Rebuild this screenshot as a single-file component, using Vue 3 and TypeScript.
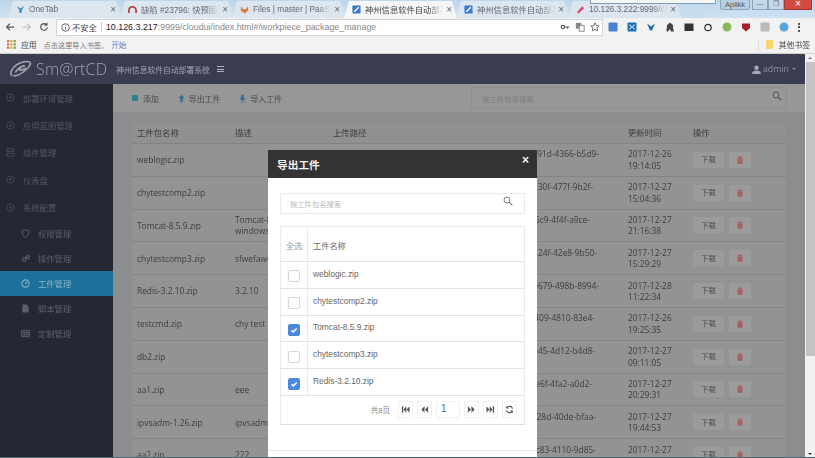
<script setup lang="ts">
interface Row {
  name: string
  desc: string
  path: string
  end: number
  date: string
  time: string
}

const tabs = [
  { title: 'OneTab', color: '#3d8fd1', mark: 'v', active: false },
  { title: '缺陷 #23796: 快预固', color: '#b5473f', mark: 'arc', active: false },
  { title: 'Files | master | PaaS /', color: '#e2763a', mark: 'fox', active: false },
  { title: '神州信息软件自动部署', color: '#3a78d8', mark: 'box', active: true },
  { title: '神州信息软件自动部署', color: '#3a78d8', mark: 'box', active: false },
  { title: '10.126.3.222:9999/clc', color: '#d9476a', mark: 'pen', active: false },
]

const extensions = ['#4a7fd6', '#1c6fb5', '#1d6fb0', '#444', '#333', '#333', '#8cb85c', '#a81e2a', '#b9b9b9', '#58a6dd']

const topMenu = [
  { label: '部署环境管理', icon: 'ring' },
  { label: '应用蓝图管理', icon: 'ring' },
  { label: '组件管理', icon: 'stack' },
  { label: '仪表盘', icon: 'ring' },
  { label: '系统配置', icon: 'ring' },
]
const subMenu = [
  { label: '权限管理', icon: 'shield', active: false },
  { label: '操作管理', icon: 'gears', active: false },
  { label: '工件管理', icon: 'gauge', active: true },
  { label: '脚本管理', icon: 'file', active: false },
  { label: '定制管理', icon: 'grid', active: false },
]

const rows: Row[] = [
  { name: 'weblogic.zip', desc: '', path: '/cloudui/repo/workpiece/5e7c291d-4366-b5d9-', end: 599, date: '2017-12-26', time: '19:14:05' },
  { name: 'chytestcomp2.zip', desc: '', path: '/cloudui/repo/workpiece/7a1c230f-477f-9b2f-', end: 593, date: '2017-12-27', time: '15:04:36' },
  { name: 'Tomcat-8.5.9.zip', desc: 'Tomcat-8.5.9 windows', path: '/cloudui/repo/workpiece/3fd065c9-4f4f-a9ce-', end: 590, date: '2017-12-27', time: '21:16:38' },
  { name: 'chytestcomp3.zip', desc: 'sfwefawef', path: '/cloudui/repo/workpiece/90be424f-42e8-9b50-', end: 597, date: '2017-12-27', time: '15:29:29' },
  { name: 'Redis-3.2.10.zip', desc: '3.2.10', path: '/cloudui/repo/workpiece/c21d0679-498b-8994-', end: 599, date: '2017-12-28', time: '11:22:34' },
  { name: 'testcmd.zip', desc: 'chy  test', path: '/cloudui/repo/workpiece/68ab3409-4810-83e4-', end: 595, date: '2017-12-26', time: '19:25:35' },
  { name: 'db2.zip', desc: '', path: '/cloudui/repo/workpiece/b17f6e45-4d12-b4d8-', end: 595, date: '2017-12-27', time: '09:11:05' },
  { name: 'aa1.zip', desc: 'eee', path: '/cloudui/repo/workpiece/42c9de6f-4fa2-a0d2-', end: 592, date: '2017-12-27', time: '20:29:31' },
  { name: 'ipvsadm-1.26.zip', desc: 'ipvsadm-1.26', path: '/cloudui/repo/workpiece/d3e0128d-40de-bfaa-', end: 596, date: '2017-12-27', time: '19:44:53' },
  { name: 'aa2.zip', desc: '222', path: '/cloudui/repo/workpiece/81f5ac83-4110-9d85-', end: 596, date: '2017-12-27', time: '20:31:17' },
]

const exportRows = [
  { name: 'weblogic.zip', checked: false },
  { name: 'chytestcomp2.zip', checked: false },
  { name: 'Tomcat-8.5.9.zip', checked: true },
  { name: 'chytestcomp3.zip', checked: false },
  { name: 'Redis-3.2.10.zip', checked: true },
]

// path 单元格右边缘在 623
function pathPad(end: number) {
  return 623 - end + 'px'
}
</script>

<template>
  <div class="screen">
    <div class="tabstrip">
      <div v-for="tab in tabs" :key="tab.title + tab.active" class="tab" :class="{ on: tab.active }">
        <svg class="favicon" viewBox="0 0 10 10">
          <path v-if="tab.mark === 'v'" d="M1 1l4 3 4-3-2.6 5v3H3.6V6z" :fill="tab.color" />
          <path v-else-if="tab.mark === 'arc'" d="M1 9V6a4 4 0 0 1 8 0v3" fill="none" :stroke="tab.color" stroke-width="2" />
          <path v-else-if="tab.mark === 'fox'" d="M5 9.5L.6 5.8 1.8 1l1.4 3.6h3.6L8.2 1l1.2 4.8z" :fill="tab.color" />
          <g v-else-if="tab.mark === 'box'">
            <rect x="0.5" y="0.5" width="9" height="9" rx="1" :fill="tab.color" />
            <path d="M2.5 7.5L7.5 2.5" stroke="#fff" stroke-width="1.6" />
          </g>
          <path v-else d="M1 8L7 1.5 9 3.5 3 9.5z" :fill="tab.color" />
        </svg>
        <span class="tab-title">{{ tab.title }}</span>
        <span class="tab-close">×</span>
      </div>
      <div class="tab-spare"></div>
      <div class="win-user">Aplikk</div>
      <div class="win-btn">—</div>
      <div class="win-btn">❐</div>
      <div class="win-close">×</div>
      <div class="tooltip-edge"></div>
    </div>

    <div class="toolbar">
      <svg class="nav" viewBox="0 0 12 12"><path d="M11 6H2M6 2L2 6l4 4" fill="none" stroke="#555" stroke-width="1.5" /></svg>
      <svg class="nav" viewBox="0 0 12 12"><path d="M1 6h9M6 2l4 4-4 4" fill="none" stroke="#c4c4c4" stroke-width="1.5" /></svg>
      <svg class="nav" viewBox="0 0 12 12"><path d="M10 6.500A4 4 0 1 1 8.800 3M9.500 .8v3h-3" fill="none" stroke="#555" stroke-width="1.400" /></svg>
      <div class="omnibox">
        <svg class="info" viewBox="0 0 10 10"><circle cx="5" cy="5" r="4.200" fill="none" stroke="#555" /><path d="M5 4.400v3M5 2.500v1" stroke="#555" /></svg>
        <span class="insecure">不安全</span>
        <span class="divider"></span>
        <span class="host">10.126.3.217</span><span class="url-rest">:9999/cloudui/index.html#/workpiece_package_manage</span>
        <span class="grow"></span>
        <svg class="omni-ico" viewBox="0 0 12 12"><circle cx="3.500" cy="6" r="2" fill="none" stroke="#555" stroke-width="1.300" /><path d="M5.500 6H11M9 6v2" stroke="#555" stroke-width="1.300" /></svg>
        <svg class="omni-ico" viewBox="0 0 12 12"><rect x="1" y="1" width="6.500" height="7" fill="#888" /><rect x="5" y="4" width="6" height="7" fill="#fff" stroke="#777" /></svg>
        <svg class="omni-ico" viewBox="0 0 12 12"><path d="M6 1l1.500 3.300 3.500.4-2.600 2.400.8 3.500L6 8.800l-3.200 1.800.8-3.500L1 4.700l3.500-.4z" fill="none" stroke="#555" /></svg>
      </div>
      <div class="ext-row">
        <svg v-for="(c, i) in extensions" :key="i" class="ext" viewBox="0 0 10 10">
          <circle v-if="i === 5" cx="5" cy="5.500" r="3.200" fill="none" :stroke="c" stroke-width="1.200" />
          <circle v-else-if="i === 6 || i === 9" cx="5" cy="5" r="4.500" :fill="c" />
          <path v-else-if="i === 2" d="M1 1.500l4 3 4-3-3 7H4z" :fill="c" />
          <path v-else-if="i === 7" d="M1 1.500h8V6L5 9.500 1 6z" :fill="c" />
          <path v-else-if="i === 3" d="M2 3l3-2.500L8 3v3l1 3.500H6L5 7 3 9.500H1.500z" :fill="c" />
          <rect v-else-if="i === 4" x="0.500" y="1.500" width="9" height="7.500" :fill="c" />
          <g v-else-if="i === 1">
            <rect x="0.500" y="0.500" width="9" height="9" rx="1" :fill="c" />
            <path d="M2.500 2.500L4.500 5 2.500 7.500M7.500 2.500L5.500 5 7.500 7.500" fill="none" stroke="#fff" stroke-width="1" />
          </g>
          <rect v-else x="0.500" y="0.500" width="9" height="9" rx="1" :fill="c" />
        </svg>
      </div>
      <div class="kebab"><i></i><i></i><i></i></div>
    </div>

    <div class="bookmarks">
      <svg class="apps" viewBox="0 0 9 9">
        <g v-for="y in [0, 3.3, 6.6]" :key="y">
          <rect x="0" :y="y" width="2.200" height="2.200" fill="#d9734a" />
          <rect x="3.300" :y="y" width="2.200" height="2.200" fill="#d8a93d" />
          <rect x="6.600" :y="y" width="2.200" height="2.200" fill="#6aa35c" />
        </g>
      </svg>
      <span class="bm-apps">应用</span>
      <span class="bm-hint">点击这里导入书签。</span>
      <span class="bm-link">开始</span>
      <span class="grow"></span>
      <span class="bm-sep"></span>
      <svg class="folder" viewBox="0 0 10 12"><rect width="9" height="11" y="0.500" rx="1" fill="#f5d76e" /></svg>
      <span class="bm-apps">其他书签</span>
    </div>

    <div class="page">
      <div class="page-main">
        <header class="topbar">
          <svg class="logo" viewBox="0 0 22 18">
            <path d="M3 15C0 13 3 7 8 4c4-2.500 10-3.500 12-2 1.500 1.500-1 5-4 7.500-4 3.500-9 6-12 5.500" fill="none" stroke="#a3a5ae" stroke-width="1.500" />
            <path d="M6 12c2-4 6-6.500 9-6.500-2.500.5-4.500 2-5 4 2 .8 4-.2 6-2" fill="none" stroke="#a3a5ae" stroke-width="1.500" />
          </svg>
          <span class="brand">Sm@rtCD</span>
          <span class="system">神州信息软件自动部署系统</span>
          <span class="burger"><i></i><i></i><i></i></span>
          <span class="grow"></span>
          <svg class="user" viewBox="0 0 10 10"><circle cx="5" cy="3" r="2.500" fill="#a6a8b2" /><path d="M0 10c0-3 2-4 5-4s5 1 5 4z" fill="#a6a8b2" /></svg>
          <span class="admin">admin</span>
          <span class="caret"></span>
        </header>

        <div class="body">
          <aside class="side">
            <div v-for="m in topMenu" :key="m.label" class="side-top">
              <svg class="side-ico" viewBox="0 0 10 10">
                <g v-if="m.icon === 'ring'">
                  <circle cx="5" cy="5" r="4" fill="none" stroke="#4a4d58" />
                  <circle cx="5" cy="5" r="1.300" fill="#4a4d58" />
                </g>
                <path v-else d="M1 1h8v3H1zM1 6h8v3H1z" fill="none" stroke="#4a4d58" />
              </svg>
              <span>{{ m.label }}</span>
            </div>
            <div v-for="m in subMenu" :key="m.label" class="side-sub" :class="{ on: m.active }">
              <svg class="side-ico" viewBox="0 0 10 10">
                <path v-if="m.icon === 'shield'" d="M5 .8l3.800 1.400c0 3.500-1 6-3.800 7.200C2.200 8.200 1.200 5.700 1.200 2.200z" fill="none" stroke="currentColor" />
                <g v-else-if="m.icon === 'gears'" fill="none" stroke="currentColor" stroke-width="1.300">
                  <circle cx="3.500" cy="6.200" r="2.100" />
                  <circle cx="7.500" cy="3.500" r="1.700" />
                </g>
                <g v-else-if="m.icon === 'gauge'">
                  <circle cx="5" cy="5" r="4" fill="none" stroke="currentColor" stroke-width="1.200" />
                  <path d="M5 5.500L7 3" stroke="currentColor" stroke-width="1.200" />
                </g>
                <path v-else-if="m.icon === 'file'" d="M1.500 .5H6l2.500 2.500v6.500h-7z" fill="currentColor" />
                <path v-else d="M.5 1.500h9v7h-9zM.5 4h9M.5 6.300h9M3.500 1.500v7M6.500 1.500v7" fill="none" stroke="currentColor" />
              </svg>
              <span>{{ m.label }}</span>
            </div>
          </aside>

          <main class="content">
            <div class="actions">
              <span class="act"><i class="act-plus"></i>添加</span>
              <span class="act">
                <svg class="act-ico" viewBox="0 0 10 10"><path d="M5 1L2 4.500h2V8h2V4.500h2zM1.500 9h7" fill="#2b6f8e" stroke="#2b6f8e" stroke-width=".5" /></svg>导出工件
              </span>
              <span class="act">
                <svg class="act-ico" viewBox="0 0 10 10"><path d="M5 8L2 4.500h2V1h2v3.500h2zM1.500 9h7" fill="#2b6f8e" stroke="#2b6f8e" stroke-width=".5" /></svg>导入工件
              </span>
              <div class="act-search">
                <span>按工件包名搜索</span>
                <svg class="mag" viewBox="0 0 10 10"><circle cx="4" cy="4" r="3" fill="none" stroke="#555" /><path d="M6.300 6.300L9.300 9.300" stroke="#555" stroke-width="1.200" /></svg>
              </div>
            </div>

            <div class="table">
              <div class="tr thead">
                <div>工件包名称</div>
                <div>描述</div>
                <div>上传路径</div>
                <div>更新时间</div>
                <div>操作</div>
              </div>
              <div v-for="r in rows" :key="r.name" class="tr">
                <div>{{ r.name }}</div>
                <div class="desc">{{ r.desc }}</div>
                <div class="path">
                  <span class="path-head" :style="{ paddingRight: pathPad(r.end) }">{{ r.path }}</span>
                  <span class="path-tail">{{ r.name }}</span>
                </div>
                <div>{{ r.date }}<br />{{ r.time }}</div>
                <div class="ops">
                  <span class="btn">下载</span>
                  <span class="btn trash">
                    <svg viewBox="0 0 10 10"><path d="M1.500 2.500h7M3.500 2.500V1h3v1.500M2.300 3.500h5.400V9.300H2.300z" fill="#a8605f" stroke="#a8605f" stroke-width=".7" /></svg>
                  </span>
                </div>
              </div>
            </div>
          </main>

          <section class="modal">
            <div class="modal-head">
              <span>导出工件</span>
              <b>×</b>
            </div>
            <div class="modal-body">
              <div class="modal-search">
                <span>按工件包名搜索</span>
                <svg class="mag" viewBox="0 0 10 10"><circle cx="4" cy="4" r="3" fill="none" stroke="#777" /><path d="M6.300 6.300L9.300 9.300" stroke="#777" stroke-width="1.200" /></svg>
              </div>
              <div class="pick">
                <div class="pick-row pick-head">
                  <div class="pick-check">全选</div>
                  <div class="pick-name">工件名称</div>
                </div>
                <div v-for="f in exportRows" :key="f.name" class="pick-row">
                  <div class="pick-check">
                    <span class="box" :class="{ checked: f.checked }">
                      <svg v-if="f.checked" viewBox="0 0 10 10"><path d="M2.500 5.200l1.800 1.800 3.400-3.600" fill="none" stroke="#fff" stroke-width="1.500" /></svg>
                    </span>
                  </div>
                  <div class="pick-name">{{ f.name }}</div>
                </div>
                <div class="pager">
                  <span class="pages">共8页</span>
                  <span class="pg"><svg viewBox="0 0 10 10"><path d="M1 1.500h1.500v7H1zM6 1.500v7L2.800 5zM9.500 1.500v7L6.300 5z" fill="#555" /></svg></span>
                  <span class="pg"><svg viewBox="0 0 10 10"><path d="M5 1.500v7L1.500 5zM9 1.500v7L5.500 5z" fill="#555" /></svg></span>
                  <span class="pg-input">1</span>
                  <span class="pg"><svg viewBox="0 0 10 10"><path d="M1 1.500v7L4.500 5zM5 1.500v7L8.500 5z" fill="#555" /></svg></span>
                  <span class="pg"><svg viewBox="0 0 10 10"><path d="M.5 1.500v7L3.700 5zM4 1.500v7L7.200 5zM7.500 1.500H9v7H7.500z" fill="#555" /></svg></span>
                  <span class="pg"><svg viewBox="0 0 10 10"><path d="M8.500 4A3.700 3.700 0 0 0 2 3M1.500 6A3.700 3.700 0 0 0 8 7" fill="none" stroke="#555" stroke-width="1.300" /><path d="M1.200 1v3h3zM8.800 9V6h-3z" fill="#555" /></svg></span>
                </div>
              </div>
            </div>
            <div class="modal-foot"></div>
          </section>
        </div>
      </div>

      <div class="scrollbar">
        <i class="arrow-up"></i>
        <div class="thumb"></div>
        <span class="grow"></span>
        <i class="arrow-down"></i>
      </div>
    </div>
    <div class="taskbar-edge"></div>
  </div>
</template>

<style>
html, body { margin: 0; overflow: hidden; }
</style>

<style scoped>
.screen {
  position: relative;
  display: flex;
  flex-direction: column;
  width: 815px;
  height: 458px;
  overflow: hidden;
  font-family: "Open Sans", "Noto Sans CJK SC", sans-serif;
  font-size: 8.4px;
  filter: blur(.3px);
}
.grow { flex: 1; }

/* 标签栏 */
.tabstrip {
  position: relative;
  display: flex;
  height: 18px;
  padding-left: 8px;
  background: linear-gradient(#bcd6ec, #cfe2f2);
  font-family: "Liberation Sans", "Noto Sans CJK SC", sans-serif;
}
.tab {
  display: flex;
  align-items: center;
  width: 113px;
  margin-right: -1px;
  padding: 0 5px 0 8px;
  box-sizing: border-box;
  background: #dde6ee;
  clip-path: polygon(5px 1px, calc(100% - 5px) 1px, 100% 100%, 0 100%);
  color: #667;
  font-size: 8.3px;
}
.tab.on { background: #f6f6f6; color: #444; }
.favicon { width: 9px; height: 9px; margin-right: 4px; flex: none; }
.tab-title {
  flex: 1;
  min-width: 0;
  overflow: hidden;
  white-space: nowrap;
  -webkit-mask-image: linear-gradient(90deg, #000 82%, transparent);
  mask-image: linear-gradient(90deg, #000 82%, transparent);
}
.tab-close { margin-left: 3px; font-size: 10px; color: #666; }
.tab-spare {
  width: 24px;
  margin-left: 2px;
  background: #c7dcee;
  clip-path: polygon(4px 1px, calc(100% - 4px) 1px, 100% 100%, 0 100%);
}
.win-user {
  position: absolute;
  left: 720px;
  top: 0;
  width: 30px;
  height: 10px;
  border: 1px solid #8ba7bf;
  border-top: 0;
  border-radius: 0 0 3px 3px;
  background: #b8cfe2;
  box-sizing: border-box;
  color: #555;
  font-size: 7.5px;
  line-height: 9px;
  text-align: center;
}
.win-btn, .win-close {
  position: absolute;
  top: 0;
  height: 10px;
  border: 1px solid #8ba7bf;
  border-top: 0;
  background: #c5d9e8;
  box-sizing: border-box;
  color: #667;
  font-size: 7px;
  line-height: 8px;
  text-align: center;
}
.win-btn { left: 752px; width: 16px; }
.win-btn + .win-btn { left: 768px; }
.win-close {
  left: 784px;
  width: 28px;
  background: #cf4b3f;
  border-color: #a33;
  color: #fff;
  font-size: 10px;
}
.tooltip-edge {
  position: absolute;
  left: 590px;
  top: 0;
  width: 124px;
  height: 3px;
  background: #f4f6f7;
  border: 1px solid #7e9bb0;
  border-top: 0;
}

/* 地址栏 */
.toolbar {
  display: flex;
  align-items: center;
  height: 18px;
  padding: 0 0 0 5px;
  background: #f2f2f2;
}
.nav { width: 10px; height: 10px; margin-right: 7px; flex: none; }
.omnibox {
  display: flex;
  align-items: center;
  flex: none;
  width: 547px;
  height: 17px;
  padding: 0 2px 0 4px;
  box-sizing: border-box;
  background: #fff;
  border: 1px solid #d4d4d4;
  font-family: "Liberation Sans", "Noto Sans CJK SC", sans-serif;
  font-size: 8.9px;
  white-space: nowrap;
}
.info { width: 9px; height: 9px; margin-right: 2px; }
.insecure { color: #444; font-size: 8.3px; }
.divider { width: 1px; height: 10px; margin: 0 4px; background: #ccc; }
.host { color: #222; }
.url-rest { color: #888; }
.omni-ico { width: 10px; height: 10px; margin-left: 5px; margin-right: 0; }
.ext-row { display: flex; flex: none; margin-left: 5px; gap: 9px; }
.ext { width: 10px; height: 10px; }
.kebab { display: flex; flex-direction: column; gap: 1.5px; margin-left: 9px; }
.kebab i { width: 2px; height: 2px; background: #555; }

/* 书签栏 */
.bookmarks {
  display: flex;
  align-items: center;
  height: 18px;
  padding: 0 5px 0 7px;
  box-sizing: border-box;
  background: #f2f2f2;
  border-bottom: 1px solid #d0d0d0;
}
.apps { width: 9px; height: 9px; margin-right: 5px; }
.bm-apps { color: #444; font-size: 7.8px; }
.bm-hint { margin-left: 7px; color: #777; font-size: 7.2px; }
.bm-link { margin-left: 3px; color: #5f80c8; font-size: 7.5px; }
.bm-sep { width: 1px; height: 12px; margin-right: 7px; background: #ddd; }
.folder { width: 8px; height: 11px; margin-right: 5px; }

/* 页面 */
.page { flex: 1; display: flex; min-height: 0; }
.page-main { width: 805px; display: flex; flex-direction: column; }
.topbar {
  display: flex;
  align-items: center;
  height: 30px;
  padding: 0 9px;
  box-sizing: border-box;
  background: #3a3c50;
  flex: none;
}
.logo { width: 23px; height: 19px; margin-right: 4px; }
.brand {
  color: #a2a4ae;
  font-size: 16px;
  font-weight: 300;
  letter-spacing: .2px;
}
.system { margin-left: 9px; color: #a3a5af; font-size: 7.8px; }
.burger { display: flex; flex-direction: column; gap: 1.5px; margin-left: 7px; }
.burger i { width: 7px; height: 1px; background: #b0b2bb; }
.user { width: 9px; height: 9px; margin-right: 2px; }
.admin { color: #8f919c; font-size: 8.8px; }
.caret {
  margin-left: 3px;
  border: 2.5px solid transparent;
  border-top-color: #8f919c;
  border-bottom: 0;
}

.body { position: relative; flex: 1; display: flex; min-height: 0; }
.side { width: 113px; flex: none; background: #252733; color: #565964; }
.side-top, .side-sub { display: flex; align-items: center; font-size: 8.3px; white-space: nowrap; }
.side-top { height: 27.4px; padding-left: 6px; }
.side-sub { height: 25px; padding-left: 21px; color: #5d606b; }
.side-sub.on { background: #1b7199; color: #8cb2c6; }
.side-ico { width: 9px; height: 9px; margin-right: 8px; flex: none; }

.content {
  flex: 1;
  min-width: 0;
  background: #8c8d8e;
  color: #3c3c3c;
  overflow: hidden;
}
.actions {
  display: flex;
  align-items: center;
  height: 28px;
  padding: 0 18px 0 19px;
  background: #979797;
  font-size: 7.9px;
  color: #484848;
}
.act { display: flex; align-items: center; margin-right: 18px; white-space: nowrap; }
.act-plus { width: 6px; height: 6px; margin-right: 5px; background: #2b7f8e; border-radius: 1px; }
.act-ico { width: 9px; height: 9px; margin-right: 3px; }
.act-search {
  display: flex;
  align-items: center;
  justify-content: space-between;
  width: 316px;
  height: 22px;
  margin-left: auto;
  padding: 0 4px 0 10px;
  box-sizing: border-box;
  border: 1px solid #8f8f8f;
  color: #7c7c7c;
  font-size: 7.4px;
}
.mag { width: 10px; height: 10px; margin-bottom: 5px; }
.table { margin: 10px 19px 0; }
.tr {
  display: grid;
  grid-template-columns: 98px 98px 295px 65px 1fr;
  align-items: center;
  height: 32.8px;
  border-bottom: 1px solid #838384;
  box-sizing: border-box;
  background: #939393;
  line-height: 11.5px;
}
.tr > div { padding-left: 5px; }
.thead { height: 22px; background: #8f9092; }
.desc { max-width: 60px; }
.path { white-space: nowrap; min-width: 0; }
.path-head { display: block; text-align: right; }
.path-tail { display: block; }
.ops { display: flex; gap: 5px; }
.btn {
  display: flex;
  align-items: center;
  justify-content: center;
  width: 31px;
  height: 16px;
  background: #9b9b9b;
  color: #4a4a4a;
  font-size: 7.3px;
}
.btn.trash { width: 22px; }
.trash svg { width: 8px; height: 8px; }

/* 弹窗 */
.modal {
  position: absolute;
  left: 268px;
  top: 66px;
  width: 269px;
  height: 338px;
  background: #fff;
  font-family: "Liberation Sans", "Noto Sans CJK SC", sans-serif;
  color: #666;
}
.modal-head {
  display: flex;
  align-items: center;
  justify-content: space-between;
  height: 28px;
  padding: 0 8px 0 9px;
  box-sizing: border-box;
  background: #333;
  color: #f2f2f2;
  font-size: 10.7px;
  font-weight: bold;
}
.modal-head b { font-size: 12px; margin-bottom: 8px; }
.modal-body { padding: 15px 12px 0; }
.modal-search {
  display: flex;
  align-items: center;
  justify-content: space-between;
  height: 21px;
  padding: 0 11px 0 9px;
  box-sizing: border-box;
  border: 1px solid #e9e9ee;
  color: #b8b8b8;
  font-size: 7.3px;
}
.pick { margin-top: 12px; border: 1px solid #e9e9ee; border-bottom-color: #ddd; }
.pick-row {
  display: flex;
  height: 26.8px;
  box-sizing: border-box;
  border-bottom: 1px solid #e2e2e5;
  font-size: 8.4px;
}
.pick-head { height: 35px; }
.pick-check {
  display: flex;
  align-items: center;
  justify-content: center;
  width: 27px;
  flex: none;
  box-sizing: border-box;
  border-right: 1px solid #e9e9ee;
  padding-top: 3px;
}
.pick-head .pick-check { color: #9a9a9a; font-size: 8.4px; padding-top: 2px; }
.pick-name { display: flex; align-items: center; padding-left: 5px; padding-bottom: 2px; }
.pick-head .pick-name { font-size: 8.2px; padding-bottom: 0; padding-top: 2px; }
.box {
  display: block;
  width: 12px;
  height: 12px;
  box-sizing: border-box;
  border: 1px solid #d8d8d8;
  border-radius: 2px;
}
.box.checked { background: #4a89dc; border-color: #4a89dc; }
.box svg { display: block; width: 10px; height: 10px; }
.pager {
  display: flex;
  align-items: center;
  justify-content: flex-end;
  gap: 4px;
  height: 28px;
  padding-right: 7px;
}
.pages { margin-right: 4px; color: #888; font-size: 7.5px; }
.pg {
  display: flex;
  align-items: center;
  justify-content: center;
  width: 15px;
  height: 17px;
  box-sizing: border-box;
  border: 1px solid #f0f0f0;
}
.pg svg { width: 9px; height: 9px; }
.pg-input {
  width: 24px;
  height: 17px;
  box-sizing: border-box;
  border: 1px solid #f0f0f0;
  padding-left: 4px;
  color: #666;
  font-size: 10px;
  line-height: 14px;
}
.modal-foot { margin-top: 25px; border-top: 1px solid #e5e5e5; }

/* 滚动条 */
.scrollbar {
  display: flex;
  flex-direction: column;
  align-items: center;
  width: 10px;
  padding: 3px 0;
  box-sizing: border-box;
  background: #f1f1f1;
}
.thumb { width: 9px; height: 294px; margin-top: 3px; background: #c4c4c4; }
.arrow-up, .arrow-down { border: 2.5px solid transparent; }
.arrow-up { border-bottom-color: #777; border-top: 0; }
.arrow-down { border-top-color: #333; border-bottom: 0; }
.taskbar-edge {
  position: absolute;
  left: 0;
  right: 0;
  bottom: 0;
  height: 1px;
  background: #55616c;
}
</style>
